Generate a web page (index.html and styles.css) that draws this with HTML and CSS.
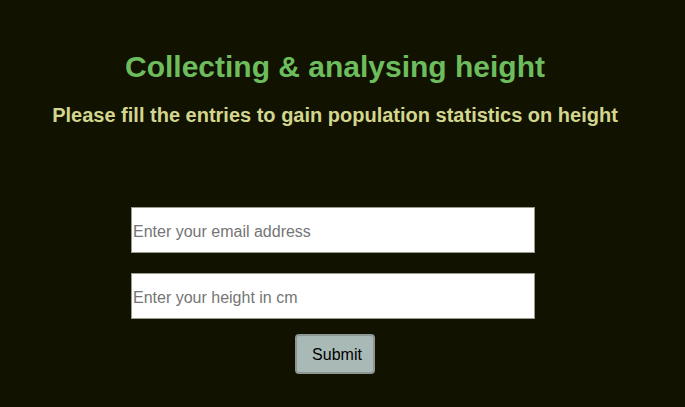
FILE: index.html
```html
<!DOCTYPE html>
<html>
<head>
<meta charset="utf-8">
<link rel="stylesheet" href="styles.css">
</head>
<body>
<div class="page">
  <h1 class="title">Collecting &amp; analysing height</h1>
  <h2 class="subtitle">Please fill the entries to gain population statistics on height</h2>
  <form class="form">
    <input class="field" type="email" placeholder="Enter your email address">
    <input class="field" type="text" placeholder="Enter your height in cm">
    <button class="submit" type="button">Submit</button>
  </form>
</div>
</body>
</html>
```
FILE: styles.css
```css
html, body {
  margin: 0;
  padding: 0;
  background: #121200;
  height: 100%;
  overflow: hidden;
}
.page {
  width: 670px;
  font-family: "Liberation Sans", Arial, sans-serif;
  display: flex;
  flex-direction: column;
  align-items: center;
  padding-top: 49px;
}
.title {
  margin: 0;
  font-size: 30px;
  font-weight: bold;
  color: #6dbd5e;
  line-height: 36px;
}
.subtitle {
  margin: 17px 0 0;
  font-size: 20px;
  font-weight: bold;
  color: #d2d68e;
  line-height: 26px;
}
.form {
  margin-top: 79px;
  display: flex;
  flex-direction: column;
  align-items: center;
}
.field {
  box-sizing: border-box;
  width: 404px;
  height: 46px;
  margin: 0 4px 20px 0;
  padding: 3px 1px 0;
  border: 1px solid #9a9a90;
  background: #fff;
  font-family: "Liberation Sans", Arial, sans-serif;
  font-size: 16px;
  outline: none;
}
.field::placeholder {
  color: #757575;
}
.field:last-of-type {
  margin-bottom: 15px;
}
.submit {
  box-sizing: border-box;
  width: 80px;
  height: 40px;
  padding: 2px 0 0 4px;
  background: #a9bab6;
  border: 2px solid #8c9692;
  border-radius: 4px;
  font-family: "Liberation Sans", Arial, sans-serif;
  font-size: 16px;
  color: #000;
}
```
